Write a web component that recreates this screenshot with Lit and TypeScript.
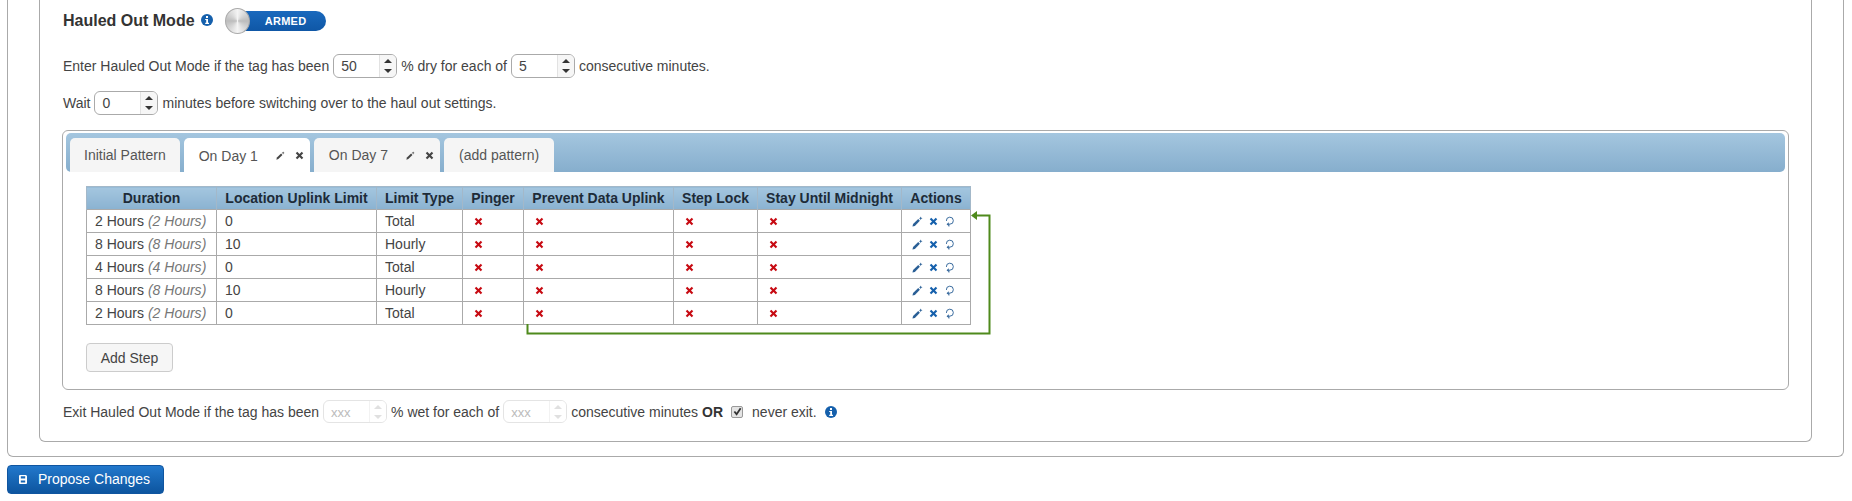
import { LitElement, css, html, svg } from "lit";
import { customElement } from "lit/decorators.js";

const crossPath = "M1 3 3 1 6 4 9 1 11 3 8 6 11 9 9 11 6 8 3 11 1 9 4 6Z";

const cross = (cls: string) =>
  html`<svg class=${cls} viewBox="0 0 12 12"><path d=${crossPath} fill="currentColor"></path></svg>`;

const pencil = (cls: string) =>
  html`<svg class="${cls} pen" viewBox="0 0 12 12">
    <path d="M0.5 11.5 1.2 8.8 6.8 3.4 8.6 5.2 3.1 10.8Z" fill="currentColor"></path>
    <path d="M9.5 0.5 10.1 1.9 11.5 2.5 10.1 3.1 9.5 4.5 8.9 3.1 7.5 2.5 8.9 1.9Z" fill="currentColor"></path>
  </svg>`;

const undo = html`<svg class="act loop" viewBox="0 0 12 12">
  <path d="M2.6 5.4A3.8 3.8 0 1 1 6.4 8.9H5M5.4 9V11.5" fill="none" stroke="currentColor" stroke-width="1"></path>
  <path d="M5.2 6.8 2.8 8.9 5.2 11Z" fill="currentColor"></path>
</svg>`;

const info = html`<svg class="info" viewBox="0 0 12 12">
  <circle cx="6" cy="6" r="6" fill="#1560ac"></circle>
  <rect x="5" y="2" width="2" height="2" fill="#fff"></rect>
  <path d="M4.2 5H7V8.8H8V10H4.2V8.8H5.2V6.1H4.2Z" fill="#fff"></path>
</svg>`;

const spin = (value: string, disabled = false) => html`
  <span class="spin ${disabled ? "off" : ""}">
    ${disabled ? html`<span class="ph">xxx</span>` : html`<span class="val">${value}</span>`}
    <span class="arrows">
      <svg viewBox="0 0 8 4"><path d="M4 0 8 4H0Z" fill="currentColor"></path></svg>
      <svg viewBox="0 0 8 4"><path d="M4 4 8 0H0Z" fill="currentColor"></path></svg>
    </span>
  </span>
`;

const rows = [
  ["2 Hours", "2 Hours", "0", "Total"],
  ["8 Hours", "8 Hours", "10", "Hourly"],
  ["4 Hours", "4 Hours", "0", "Total"],
  ["8 Hours", "8 Hours", "10", "Hourly"],
  ["2 Hours", "2 Hours", "0", "Total"],
];

const colWidths = [130, 160, 86, 61, 150, 84, 144, 69];

@customElement("app-root")
export class AppRoot extends LitElement {
  static styles = css`
    :host {
      display: block;
      height: 501px;
      overflow: hidden;
      background: #fff;
      font-family: "Liberation Sans", Arial, sans-serif;
      font-size: 14px;
      color: #444;
    }
    .outer {
      margin: 0 8px 0 7px;
      padding: 0 31px 14px 31px;
      border: 1px solid #aaa;
      border-top: 0;
      border-radius: 0 0 6px 6px;
    }
    .inner {
      padding: 8px 22px 18px 23px;
      border: 1px solid #aaa;
      border-top: 0;
      border-radius: 0 0 6px 6px;
    }
    .title {
      display: flex;
      align-items: center;
      height: 26px;
      font-size: 16px;
      font-weight: bold;
      color: #333;
    }
    .info {
      width: 12px;
      height: 12px;
      margin-left: 6px;
      flex: none;
    }
    .title .info {
      margin-top: -3px;
    }
    .switch {
      position: relative;
      display: flex;
      align-items: center;
      justify-content: center;
      width: 91px;
      height: 20px;
      margin-left: 22px;
      padding-left: 11px;
      box-sizing: border-box;
      border-radius: 10px;
      background: linear-gradient(#1a69bd, #0f57a6);
      color: #fff;
      font-size: 11px;
      letter-spacing: 0.3px;
    }
    .knob {
      position: absolute;
      left: -10px;
      top: -3px;
      width: 25px;
      height: 26px;
      border-radius: 50%;
      border: 1px solid #aaa;
      box-sizing: border-box;
      background: conic-gradient(#f4f4f4, #bcbcbc, #f4f4f4, #bcbcbc, #f4f4f4);
    }
    .line {
      display: flex;
      align-items: center;
      height: 24px;
      gap: 4px;
      white-space: nowrap;
    }
    .l1 {
      margin-top: 20px;
    }
    .l2 {
      margin-top: 13px;
    }
    .spin {
      display: flex;
      align-items: center;
      justify-content: space-between;
      flex: none;
      width: 64px;
      height: 24px;
      box-sizing: border-box;
      padding-left: 7px;
      border: 1px solid #aaa;
      border-radius: 6px;
      background: #fff;
      overflow: hidden;
    }
    .val {
      color: #444;
    }
    .arrows {
      display: flex;
      flex-direction: column;
      align-items: center;
      justify-content: center;
      align-self: stretch;
      gap: 6px;
      width: 16px;
      border-left: 1px solid #e2e2e2;
      background: #f6f6f6;
      color: #333;
    }
    .arrows svg {
      display: block;
      width: 8px;
      height: 4px;
    }
    .off {
      border-color: #e4e4e4;
      height: 23px;
    }
    .off .arrows {
      border-left-color: #f2f2f2;
      background: #fff;
      color: #e0e0e0;
    }
    .ph {
      color: #bbb;
      font-size: 13px;
      padding-top: 2px;
    }
    .tabbox {
      margin: 15px 0 0 -1px;
      padding: 2px 3px 17px;
      border: 1px solid #aaa;
      border-radius: 6px;
    }
    .bar {
      display: flex;
      gap: 4px;
      height: 39px;
      box-sizing: border-box;
      padding: 5px 0 0 4px;
      border-radius: 5px;
      background: linear-gradient(#a4c6df, #86aecd);
    }
    .tab {
      display: flex;
      align-items: center;
      height: 34px;
      box-sizing: border-box;
      padding: 0 15px;
      border-radius: 5px 5px 0 0;
      background: #f5f5f5;
      color: #555;
    }
    .tab.first {
      padding: 0 14px;
    }
    .tab.active {
      height: 35px;
      background: #fff;
    }
    .tab.edit {
      padding-right: 6px;
    }
    .tab .name {
      padding-right: 18px;
    }
    .tab-icon {
      width: 9px;
      height: 9px;
      color: #444;
    }
    .tab-icon + .tab-icon {
      margin-left: 10px;
    }
    .body {
      position: relative;
      padding: 14px 0 0 20px;
    }
    table {
      border-collapse: collapse;
      table-layout: fixed;
      width: 884px;
    }
    th {
      height: 23px;
      padding: 0;
      box-sizing: border-box;
      border: 1px solid #a3b8c9;
      border-bottom: 0;
      background: linear-gradient(#a4c6df, #8ab2d1);
      color: #1d2b38;
      font-weight: bold;
      text-align: center;
    }
    td {
      height: 23px;
      padding: 0 8px;
      box-sizing: border-box;
      border: 1px solid #aaa;
      color: #444;
      vertical-align: middle;
    }
    td em {
      color: #777;
    }
    .no {
      display: block;
      width: 9px;
      height: 9px;
      margin-left: 3px;
      color: #c70a12;
    }
    .acts {
      display: flex;
      align-items: center;
      gap: 6px;
      padding-left: 2px;
    }
    .act {
      display: block;
      width: 9px;
      height: 9px;
      color: #1560ac;
    }
    .act.pen,
    .act.loop {
      width: 11px;
      height: 11px;
      color: #2a5f96;
    }
    .link {
      position: absolute;
      left: 0;
      top: 0;
      width: 940px;
      height: 180px;
      pointer-events: none;
    }
    .add {
      display: block;
      width: 87px;
      height: 29px;
      margin-top: 18px;
      padding: 0;
      border: 1px solid #ccc;
      border-radius: 4px;
      background: #f6f6f6;
      color: #444;
      font: inherit;
    }
    .exit {
      margin-top: 10px;
      height: 23px;
    }
    .check {
      display: flex;
      align-items: center;
      justify-content: center;
      flex: none;
      width: 12px;
      height: 12px;
      box-sizing: border-box;
      margin: 0 5px 0 4px;
      border: 1px solid #999;
      border-radius: 2px;
      background: #e4e4e4;
    }
    .check svg {
      width: 9px;
      height: 9px;
    }
    .exit .info {
      margin-left: 4px;
    }
    b {
      color: #333;
    }
    .propose {
      display: flex;
      align-items: center;
      gap: 11px;
      width: 157px;
      height: 29px;
      margin: 8px 0 0 7px;
      padding: 0 0 1px 11px;
      box-sizing: border-box;
      border: 1px solid #0f55a0;
      border-radius: 4px;
      background: linear-gradient(#2278cc, #0d559f);
      color: #fff;
      font: inherit;
    }
    .propose svg {
      width: 8px;
      height: 9px;
    }
  `;

  render() {
    return html`
      <div class="outer">
        <div class="inner">
          <div class="title">
            Hauled Out Mode ${info}
            <span class="switch"><span class="knob"></span>ARMED</span>
          </div>
          <div class="line l1">
            <span>Enter Hauled Out Mode if the tag has been</span>${spin("50")}<span>% dry for each of</span>${spin("5")}<span>consecutive minutes.</span>
          </div>
          <div class="line l2"><span>Wait</span>${spin("0")}<span>minutes before switching over to the haul out settings.</span></div>
          <div class="tabbox">
            <div class="bar">
              <div class="tab first">Initial Pattern</div>
              <div class="tab edit active"><span class="name">On Day 1</span>${pencil("tab-icon")}${cross("tab-icon")}</div>
              <div class="tab edit"><span class="name">On Day 7</span>${pencil("tab-icon")}${cross("tab-icon")}</div>
              <div class="tab">(add pattern)</div>
            </div>
            <div class="body">
              <table>
                <colgroup>${colWidths.map((w) => html`<col style="width:${w}px" />`)}</colgroup>
                <thead>
                  <tr>
                    <th>Duration</th>
                    <th>Location Uplink Limit</th>
                    <th>Limit Type</th>
                    <th>Pinger</th>
                    <th>Prevent Data Uplink</th>
                    <th>Step Lock</th>
                    <th>Stay Until Midnight</th>
                    <th>Actions</th>
                  </tr>
                </thead>
                <tbody>
                  ${rows.map(
                    ([dur, real, limit, type]) => html`
                      <tr>
                        <td>${dur} <em>(${real})</em></td>
                        <td>${limit}</td>
                        <td>${type}</td>
                        <td>${cross("no")}</td>
                        <td>${cross("no")}</td>
                        <td>${cross("no")}</td>
                        <td>${cross("no")}</td>
                        <td><div class="acts">${pencil("act")}${cross("act")}${undo}</div></td>
                      </tr>
                    `,
                  )}
                </tbody>
              </table>
              <svg class="link" viewBox="0 0 940 180">
                ${svg`<path d="M461.5 152V161.5H923.5V43.5H908" fill="none" stroke="#4f8a1c" stroke-width="2"></path>
                <path d="M905 43.5 911 39V48Z" fill="#4f8a1c"></path>`}
              </svg>
              <button class="add">Add Step</button>
            </div>
          </div>
          <div class="line exit">
            <span>Exit Hauled Out Mode if the tag has been</span>${spin("", true)}<span>% wet for each of</span>${spin("", true)}<span>consecutive minutes</span>
            <b>OR</b>
            <span class="check">
              <svg viewBox="0 0 10 10"><path d="M1.5 5 4 8 8.5 1.5" fill="none" stroke="#333" stroke-width="2"></path></svg>
            </span>
            <span>never exit.</span>
            ${info}
          </div>
        </div>
      </div>
      <button class="propose">
        <svg viewBox="0 0 8 9"><path d="M1 0H7L8 1V8A1 1 0 0 1 7 9H1A1 1 0 0 1 0 8V1A1 1 0 0 1 1 0ZM1.8 1.2V3.4H6.2V1.2ZM1.8 5.4V7.6H6.2V5.4Z" fill="#fff" fill-rule="evenodd"></path></svg>
        Propose Changes
      </button>
    `;
  }
}
